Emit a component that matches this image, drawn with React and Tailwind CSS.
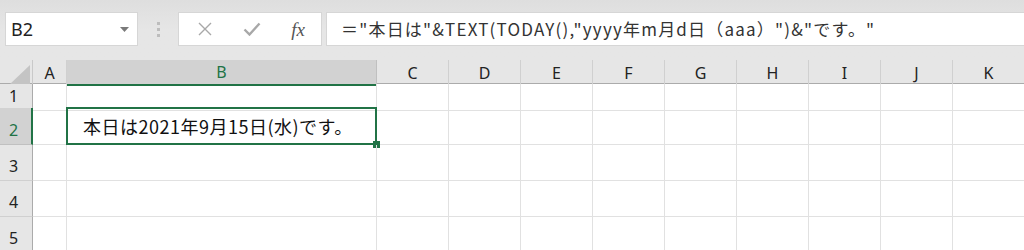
import React from "react";

const cols = ["A", "B", "C", "D", "E", "F", "G", "H", "I", "J", "K"];
const rows = [
  { n: 1, h: 24 },
  { n: 2, h: 37 },
  { n: 3, h: 36 },
  { n: 4, h: 36 },
  { n: 5, h: 36 },
];

const hdrFont = { fontFamily: "'Noto Sans', 'Open Sans', sans-serif" };

export default function App() {
  const gridCols = "grid-cols-[33px_34px_310px_72px_72px_72px_72px_72px_72px_72px_72px_72px]";
  return (
    <div className="w-[1024px] h-[250px] overflow-hidden bg-white flex flex-col">
      {/* formula bar */}
      <div className="h-[60px] shrink-0 bg-gradient-to-b from-[#dedede] via-[#e6e6e6] to-[#e6e6e6] flex items-start pt-[12px] pl-[5px]">
        <div className="w-[133px] h-[34px] bg-white border border-[#d6d6d6] flex items-center justify-between pl-[5px] pr-[8px]">
          <span className="text-[18px] text-[#222] leading-none" style={{ fontFamily: "'Noto Sans', 'Open Sans', sans-serif" }}>B2</span>
          <svg width="9" height="5" viewBox="0 0 9 5"><path d="M0 0h9L4.5 5z" fill="#7a7a7a" /></svg>
        </div>
        <div className="w-[40px] h-[34px] flex flex-col items-center justify-center gap-[3px]">
          <span className="w-[3px] h-[3px] bg-[#bdbdbd]" />
          <span className="w-[3px] h-[3px] bg-[#bdbdbd]" />
          <span className="w-[3px] h-[3px] bg-[#bdbdbd]" />
        </div>
        <div className="w-[144px] h-[34px] bg-white border border-[#d6d6d6] flex items-center">
          <div className="w-[50px] flex justify-center pl-[2px]">
            <svg width="14" height="14" viewBox="0 0 14 14"><path d="M1 1L13 13M13 1L1 13" stroke="#a8a8a8" strokeWidth="1.4" /></svg>
          </div>
          <div className="w-[46px] flex justify-center">
            <svg width="18" height="14" viewBox="0 0 18 14"><path d="M1.5 7.5L6.5 12.5L16.5 1.5" stroke="#a8a8a8" strokeWidth="2.4" fill="none" /></svg>
          </div>
          <div className="w-[46px] flex justify-center">
            <span className="italic text-[19px] text-[#555] leading-none" style={{ fontFamily: "'Liberation Serif', 'DejaVu Serif', serif" }}>fx</span>
          </div>
        </div>
        <div className="ml-[4px] flex-1 h-[34px] bg-white border border-[#d6d6d6] border-r-0 flex items-center pl-[14px]">
          <span className="text-[17px] tracking-[1.2px] text-[#333] whitespace-nowrap" style={{ fontFamily: "'Noto Sans CJK JP', 'Noto Sans', sans-serif" }}>
            ＝"本日は"&amp;TEXT(TODAY(),"yyyy年m月d日（aaa）")&amp;"です。"
          </span>
        </div>
      </div>

      {/* sheet */}
      <div className="flex-1 flex flex-col">
        {/* column header */}
        <div className={`grid ${gridCols} h-[24px] shrink-0 bg-[#e6e6e6] border-b border-[#ababab]`}>
          <div className="border-r border-[#c9c9c9] flex items-end justify-end pr-[2px] pb-[1px]">
            <svg width="20" height="19" viewBox="0 0 20 19"><path d="M20 0V19H0z" fill="#c4c4c4" /></svg>
          </div>
          {cols.map((c) => (
            <div
              key={c}
              className={
                c === "B"
                  ? "bg-[#d2d2d2] border-r border-[#c0c0c0] border-b-2 border-b-[#217346] -mb-[1px] flex items-center justify-center text-[16px] text-[#217346]"
                  : "border-r border-[#d0d0d0] flex items-center justify-center text-[16px] text-[#222]"
              }
              style={hdrFont}
            >
              {c}
            </div>
          ))}
        </div>
        {rows.map((r) => (
          <div key={r.n} className={`grid ${gridCols} shrink-0 ${r.n === 2 ? "relative z-10" : ""}`} style={{ height: r.h }}>
            <div
              className={
                r.n === 2
                  ? "bg-[#d2d2d2] border-r-2 border-[#217346] border-b border-b-[#c0c0c0] flex items-end pl-[9px] pb-[2px] text-[16px] text-[#217346]"
                  : "bg-[#e6e6e6] border-r border-[#ababab] border-b border-b-[#d0d0d0] flex items-end pl-[9px] pb-[2px] text-[16px] text-[#222]"
              }
              style={hdrFont}
            >
              {r.n}
            </div>
            {cols.map((c) => (
              <div key={c} className={`border-r border-b border-[#e1e1e1] ${c === "B" ? "relative z-10" : ""}`}>
                {r.n === 2 && c === "B" && (
                  <>
                    <div className="absolute -left-[1px] -top-[1px] right-[-1px] bottom-[-1px] border-2 border-[#217346] flex items-center pl-[15px]">
                      <span className="text-[18px] tracking-[0.5px] text-[#111] whitespace-nowrap" style={{ fontFamily: "'Noto Sans CJK JP', 'Noto Sans', sans-serif" }}>
                        本日は2021年9月15日(水)です。
                      </span>
                    </div>
                    <div className="absolute z-20 right-[-4px] bottom-[-4px] w-[7px] h-[7px] bg-[#217346]" />
                  </>
                )}
              </div>
            ))}
          </div>
        ))}
      </div>
    </div>
  );
}
